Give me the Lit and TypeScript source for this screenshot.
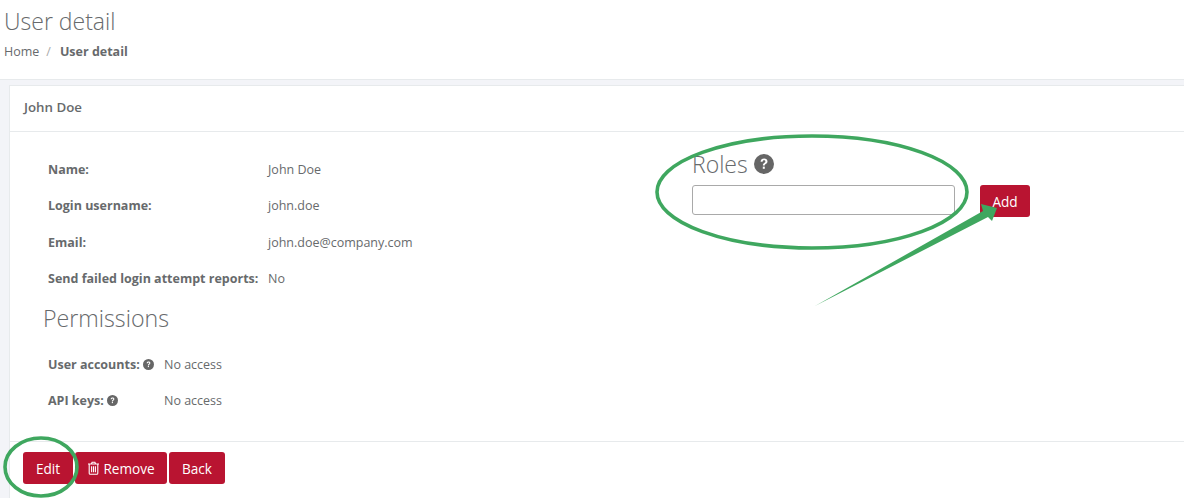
import { LitElement, html, css, svg } from "lit";
import { customElement } from "lit/decorators.js";

const help = (size: number) => html`<svg class="help" width=${size} height=${size} viewBox="0 0 20 20">
  <circle cx="10" cy="10" r="10" fill="#666"></circle>
  <path d="M6.600 7.700C6.700 5.600 8.200 4.600 10.100 4.600c2 0 3.400 1.100 3.400 2.800 0 1.300-.7 2-1.700 2.600-.8.5-1 .8-1 1.600H8.900c-.1-1.400.3-2.100 1.300-2.700.8-.5 1.200-.9 1.200-1.500 0-.7-.5-1.100-1.300-1.100-.9 0-1.400.5-1.500 1.400H6.600z" fill="#fff"></path>
  <rect x="8.800" y="12.600" width="2" height="2.200" fill="#fff"></rect>
</svg>`;

@customElement("app-root")
export class AppRoot extends LitElement {
  static styles = css`
    :host {
      display: block;
      position: relative;
      width: 1184px;
      height: 498px;
      overflow: hidden;
      background: #f3f4f8;
      font-family: "Open Sans", sans-serif;
      font-size: 12.5px;
      color: #676a6c;
    }
    .head {
      background: #fff;
      height: 80px;
      box-sizing: border-box;
      padding: 6px 4px 0;
      border-bottom: 1px solid #e7eaec;
    }
    h1 {
      margin: 0;
      font-size: 23px;
      line-height: 30px;
      font-weight: 300;
      color: #676a6c;
    }
    .crumbs {
      margin-top: 7px;
      line-height: 18px;
      display: flex;
      gap: 7px;
    }
    .crumbs b { color: #676a6c; margin-left: 2px; font-weight: 700; }
    .crumbs i { font-style: normal; color: #aaa; }
    .card {
      margin: 5px 0 0 9px;
      background: #fff;
      border: 1px solid #e7eaec;
      border-right: 0;
      height: 420px;
    }
    .card-title {
      height: 46px;
      box-sizing: border-box;
      padding: 11px 14px 0;
      line-height: 20px;
      font-size: 13.3px;
      font-weight: 600;
      border-bottom: 1px solid #e7eaec;
    }
    .body {
      height: 310px;
      box-sizing: border-box;
      display: grid;
      grid-template-columns: 648px 1fr;
      border-bottom: 1px solid #e7eaec;
    }
    .left { padding: 19.3px 0 0 33px; }
    .row {
      display: flex;
      align-items: center;
      height: 36.4px;
      padding-left: 5px;
      box-sizing: border-box;
    }
    .row b {
      font-weight: 700;
      display: flex;
      align-items: center;
      gap: 3px;
    }
    .info b { width: 220px; flex: none; white-space: nowrap; }
    .perm b { width: 116px; flex: none; }
    h2 {
      margin: 6px 0 13px;
      font-size: 23.2px;
      line-height: 30px;
      font-weight: 300;
      color: #676a6c;
    }
    .right { padding: 18px 0 0 34px; }
    .roles-title {
      display: flex;
      align-items: center;
      gap: 6px;
      font-size: 23px;
      line-height: 28px;
      font-weight: 300;
    }
    .add-row {
      display: flex;
      gap: 25px;
      margin-top: 7px;
    }
    input {
      width: 263px;
      height: 30px;
      box-sizing: border-box;
      border: 1px solid #a9a9a9;
      border-radius: 3px;
      background: #fff;
      padding: 0;
      outline: none;
    }
    button {
      font-family: inherit;
      background: #b91431;
      color: #fff;
      border: 0;
      border-radius: 3px;
      font-size: 13.6px;
      font-weight: 400;
      height: 32px;
      padding: 0;
      display: inline-flex;
      align-items: center;
      justify-content: center;
      gap: 3px;
    }
    .add { width: 50px; }
    .foot {
      display: flex;
      gap: 2px;
      padding: 10px 0 0 13px;
    }
    .edit { width: 50px; }
    .remove { width: 92px; }
    .back { width: 56px; }
    .marks {
      position: absolute;
      left: 0;
      top: 0;
      pointer-events: none;
    }
  `;

  render() {
    return html`
      <div class="head">
        <h1>User detail</h1>
        <div class="crumbs"><span>Home</span><i>/</i><b>User detail</b></div>
      </div>
      <div class="card">
        <div class="card-title">John Doe</div>
        <div class="body">
          <div class="left">
            <div class="row info"><b>Name:</b><span>John Doe</span></div>
            <div class="row info"><b>Login username:</b><span>john.doe</span></div>
            <div class="row info"><b>Email:</b><span>john.doe@company.com</span></div>
            <div class="row info"><b>Send failed login attempt reports:</b><span>No</span></div>
            <h2>Permissions</h2>
            <div class="row perm"><b>User accounts: ${help(11)}</b><span>No access</span></div>
            <div class="row perm"><b>API keys: ${help(11)}</b><span>No access</span></div>
          </div>
          <div class="right">
            <div class="roles-title">Roles ${help(20)}</div>
            <div class="add-row">
              <input type="text" />
              <button class="add">Add</button>
            </div>
          </div>
        </div>
        <div class="foot">
          <button class="edit">Edit</button>
          <button class="remove">
            <svg width="13" height="14" viewBox="0 0 13 14" fill="none" stroke="#fff" stroke-width="1.1">
              <path d="M1 3h11M2.200 3v9.200c0 .7.4 1.100 1 1.100h6.600c.6 0 1-.4 1-1.100V3M4.400 3l.7-1.800h2.800L8.600 3M4.600 5.200v6M6.500 5.200v6M8.400 5.200v6"></path>
            </svg>
            Remove
          </button>
          <button class="back">Back</button>
        </div>
      </div>
      <svg class="marks" width="1184" height="498" viewBox="0 0 1184 498" fill="none">
        ${svg`
          <ellipse cx="812" cy="192" rx="155" ry="56" stroke="#3fa75f" stroke-width="3.6"></ellipse>
          <ellipse cx="41" cy="467" rx="36" ry="29" stroke="#3fa75f" stroke-width="3.6"></ellipse>
          <path d="M815 306 L983 211 L981 204 L997 208 L992 221 L988 217 Z" fill="#3fa75f"></path>
        `}
      </svg>
    `;
  }
}
